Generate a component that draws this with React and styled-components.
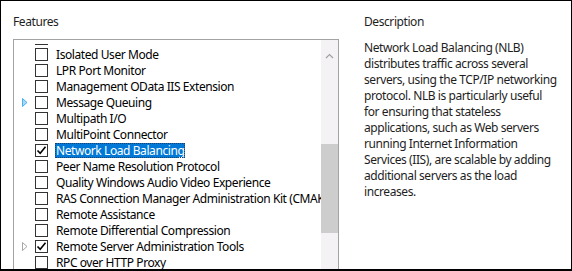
import React, { useLayoutEffect, useRef } from "react";
import styled, { createGlobalStyle } from "styled-components";

const Global = createGlobalStyle`
  html, body { margin: 0; padding: 0; background: #fff; }
  body { font-family: "Noto Sans", "Open Sans", sans-serif; }
`;

const Frame = styled.div`
  width: 572px;
  height: 271px;
  box-sizing: border-box;
  border: 1px solid #000;
  border-bottom-width: 2px;
  background: #fff;
  overflow: hidden;
  display: flex;
  font-size: 12px;
  line-height: 16px;
  letter-spacing: -0.42px;
  color: #000;
`;

const LeftPanel = styled.div`
  width: 338px;
  padding: 13px 0 0 12px;
  box-sizing: border-box;
  flex: none;
  display: flex;
  flex-direction: column;
  gap: 9px;
`;

const RightPanel = styled.div`
  flex: 1;
  padding: 13px 0 0 25px;
  display: flex;
  flex-direction: column;
  gap: 10px;
`;

const Heading = styled.div`
  color: #1e1e1e;
  height: 16px;
`;

const ListBox = styled.div`
  width: 326px;
  height: 250px;
  box-sizing: border-box;
  border: 1px solid #a3a3a3;
  display: flex;
  flex: none;
`;

const Viewport = styled.div`
  flex: 1;
  overflow: hidden;
  min-width: 0;
  margin-top: 4px;
`;

const Row = styled.div`
  height: 16px;
  display: flex;
  align-items: center;
  white-space: nowrap;
`;

const ExpanderSlot = styled.div`
  width: 21px;
  height: 16px;
  flex: none;
  display: flex;
  align-items: center;
  padding-left: 8px;
  box-sizing: border-box;
`;

const Check = styled.div`
  width: 13px;
  height: 13px;
  box-sizing: border-box;
  border: 1px solid #333;
  flex: none;
  display: flex;
  align-items: center;
  justify-content: center;
  background: #fff;
`;

const Label = styled.span`
  margin-left: 7px;
  padding: 0 1px;
  height: 15px;
  line-height: 15px;
  box-sizing: border-box;
  background: ${(p) => (p.$selected ? "#0078d7" : "transparent")};
  color: ${(p) => (p.$selected ? "#fff" : "#000")};
  outline: ${(p) => (p.$selected ? "1px dotted #1c3f66" : "none")};
  outline-offset: -1px;
`;

const Scrollbar = styled.div`
  width: 17px;
  flex: none;
  background: #f5f2f5;
  display: flex;
  flex-direction: column;
`;

const ArrowButton = styled.div`
  height: 32px;
  display: flex;
  align-items: center;
  justify-content: center;
  flex: none;
`;

const Track = styled.div`
  flex: 1;
`;

const Thumb = styled.div`
  height: 89px;
  background: #cdcdcd;
`;

const Body = styled.div`
  color: #1e1e1e;
  white-space: nowrap;
`;

const Expander = ({ kind }) => {
  if (!kind) return null;
  const hover = kind === "hover";
  return (
    <svg width="6" height="9" viewBox="0 0 6 9">
      <path
        d="M0.5 0.5 L5 4.5 L0.5 8.5 Z"
        fill={hover ? "#a8d8f6" : "none"}
        stroke={hover ? "#4ab0ee" : "#a6a6a6"}
        strokeWidth="1"
      />
    </svg>
  );
};

const CheckMark = () => (
  <svg width="11" height="11" viewBox="0 0 11 11">
    <path d="M1.5 5.5 L4.2 8.3 L9.5 1.8" fill="none" stroke="#000" strokeWidth="1.6" />
  </svg>
);

const items = [
  { name: "Internet Printing Client" },
  { name: "IP Address Management (IPAM) Server" },
  { name: "iSNS Server service" },
  { name: "Isolated User Mode" },
  { name: "LPR Port Monitor" },
  { name: "Management OData IIS Extension" },
  { name: "Message Queuing", expander: "hover" },
  { name: "Multipath I/O" },
  { name: "MultiPoint Connector" },
  { name: "Network Load Balancing", checked: true, selected: true },
  { name: "Peer Name Resolution Protocol" },
  { name: "Quality Windows Audio Video Experience" },
  { name: "RAS Connection Manager Administration Kit (CMAK)" },
  { name: "Remote Assistance" },
  { name: "Remote Differential Compression" },
  { name: "Remote Server Administration Tools", expander: "normal", checked: true },
  { name: "RPC over HTTP Proxy" },
  { name: "Setup and Boot Event Collection" },
  { name: "Simple TCP/IP Services" },
];

const descLines = [
  "Network Load Balancing (NLB)",
  "distributes traffic across several",
  "servers, using the TCP/IP networking",
  "protocol. NLB is particularly useful",
  "for ensuring that stateless",
  "applications, such as Web servers",
  "running Internet Information",
  "Services (IIS), are scalable by adding",
  "additional servers as the load",
  "increases.",
];

export default function App() {
  const vp = useRef(null);
  useLayoutEffect(() => {
    if (vp.current) vp.current.scrollTop = 46;
  }, []);
  const thumbOffset = 72;
  return (
    <>
      <Global />
      <Frame>
        <LeftPanel>
          <Heading>Features</Heading>
          <ListBox>
            <Viewport ref={vp}>
              {items.map((it) => (
                <Row key={it.name}>
                  <ExpanderSlot>
                    <Expander kind={it.expander} />
                  </ExpanderSlot>
                  <Check>{it.checked && <CheckMark />}</Check>
                  <Label $selected={it.selected}>{it.name}</Label>
                </Row>
              ))}
            </Viewport>
            <Scrollbar>
              <ArrowButton>
                <svg width="9" height="6" viewBox="0 0 9 6">
                  <path d="M1 5 L4.5 1.5 L8 5" fill="none" stroke="#a0a0a0" strokeWidth="1.2" />
                </svg>
              </ArrowButton>
              <Track>
                <Thumb style={{ marginTop: thumbOffset }} />
              </Track>
            </Scrollbar>
          </ListBox>
        </LeftPanel>
        <RightPanel>
          <Heading>Description</Heading>
          <Body>
            {descLines.map((l, i) => (
              <React.Fragment key={i}>
                {l}
                <br />
              </React.Fragment>
            ))}
          </Body>
        </RightPanel>
      </Frame>
    </>
  );
}
